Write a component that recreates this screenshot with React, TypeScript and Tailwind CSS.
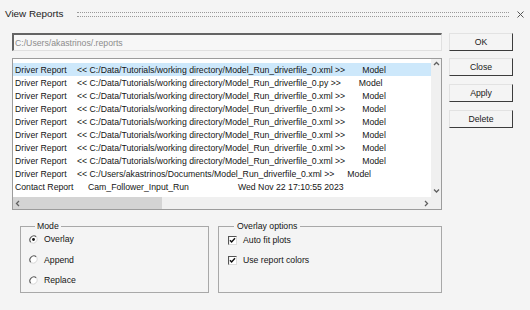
import React from 'react';

const rows = [
  { kind: 'Driver Report', path: '<< C:/Data/Tutorials/working directory/Model_Run_driverfile_0.xml >>', gap: 'ml-[17px]' },
  { kind: 'Driver Report', path: '<< C:/Data/Tutorials/working directory/Model_Run_driverfile_0.py >>', gap: 'ml-[18px]' },
  { kind: 'Driver Report', path: '<< C:/Data/Tutorials/working directory/Model_Run_driverfile_0.xml >>', gap: 'ml-[17px]' },
  { kind: 'Driver Report', path: '<< C:/Data/Tutorials/working directory/Model_Run_driverfile_0.xml >>', gap: 'ml-[17px]' },
  { kind: 'Driver Report', path: '<< C:/Data/Tutorials/working directory/Model_Run_driverfile_0.xml >>', gap: 'ml-[17px]' },
  { kind: 'Driver Report', path: '<< C:/Data/Tutorials/working directory/Model_Run_driverfile_0.xml >>', gap: 'ml-[17px]' },
  { kind: 'Driver Report', path: '<< C:/Data/Tutorials/working directory/Model_Run_driverfile_0.xml >>', gap: 'ml-[17px]' },
  { kind: 'Driver Report', path: '<< C:/Data/Tutorials/working directory/Model_Run_driverfile_0.xml >>', gap: 'ml-[17px]' },
  { kind: 'Driver Report', path: '<< C:/Users/akastrinos/Documents/Model_Run_driverfile_0.xml >>', gap: 'ml-[13px]' },
];

const Chevron = ({ dir }: { dir: 'up' | 'down' | 'left' | 'right' }) => {
  const d = {
    up: 'M1 4 L3.5 1.5 L6 4',
    down: 'M1 1.5 L3.5 4 L6 1.5',
    left: 'M4 1 L1.5 3.5 L4 6',
    right: 'M2 1 L4.5 3.5 L2 6',
  }[dir];
  return (
    <svg width="7" height="7" viewBox="0 0 7 7">
      <path d={d} fill="none" stroke="#606060" strokeWidth="1.3" />
    </svg>
  );
};

const Radio = ({ checked }: { checked?: boolean }) => (
  <svg width="9" height="9" viewBox="0 0 9 9">
    <circle cx="4.5" cy="4.5" r="4" fill="#fff" />
    <path d="M1.7 7.3 A4 4 0 0 1 7.3 1.7" fill="none" stroke="#555" strokeWidth="1.1" />
    <path d="M7.3 1.7 A4 4 0 0 1 1.7 7.3" fill="none" stroke="#dcdcdc" strokeWidth="1.1" />
    {checked && <circle cx="4.5" cy="4.5" r="1.4" fill="#111" />}
  </svg>
);

const Check = () => (
  <svg width="9" height="9" viewBox="0 0 9 9">
    <rect x="0.5" y="0.5" width="8" height="8" fill="#fff" stroke="#dcdcdc" />
    <path d="M0.5 8.5 V0.5 H8.5" fill="none" stroke="#555" strokeWidth="1.2" />
    <path d="M2 4.2 L3.6 6 L7 2.3" fill="none" stroke="#111" strokeWidth="1.4" />
  </svg>
);

const Btn = ({ label, className = '' }: { label: string; className?: string }) => (
  <div
    className={`h-[18px] flex items-center justify-center bg-[#f4f4f4] border border-t-[#e2e2e2] border-l-[#e2e2e2] border-r-[#3c3c3c] border-b-[#3c3c3c] text-[#1a1a1a] ${className}`}
  >
    {label}
  </div>
);

export default function App() {
  return (
    <div
      className="w-[530px] h-[310px] bg-[#f4f4f4] text-[#151515] text-[8.7px] leading-[12px] select-none"
      style={{ fontFamily: '"Liberation Sans", Arial, sans-serif' }}
    >
      {/* title strip */}
      <div className="h-[28px] flex items-center pl-[5px] pr-[6px]">
        <span className="w-[72px] text-[9.9px] text-[#222]">View Reports</span>
        <div className="flex-1 h-[5px] border-y border-dotted border-[#9a9a9a]" />
        <svg width="7" height="7" viewBox="0 0 7 7" className="ml-[8px]">
          <path d="M0.5 0.5 L6.5 6.5 M6.5 0.5 L0.5 6.5" stroke="#555" strokeWidth="1" />
        </svg>
      </div>

      <div className="flex pl-[12px] pt-[5px] gap-[7px]">
        <div className="w-[430px] flex flex-col">
          {/* path box */}
          <div className="h-[18px] flex items-center pl-[1px] bg-[#f7f7f7] border-t-2 border-l-2 border-r border-b border-t-[#646464] border-l-[#646464] border-r-[#e0e0e0] border-b-[#e0e0e0] text-[#8c8c8c]">
            C:/Users/akastrinos/.reports
          </div>

          {/* list */}
          <div className="mt-[7px] h-[152px] border border-[#9c9c9c] bg-white flex flex-col">
            <div className="flex-1 flex min-h-0">
              <div className="flex-1 pt-[4px] overflow-hidden">
                {rows.map((r, i) => (
                  <div
                    key={i}
                    className={`h-[13px] flex items-center pl-[2px] whitespace-pre ${i === 0 ? 'bg-[#cde8fb]' : ''}`}
                  >
                    <span className="w-[62px] shrink-0">{r.kind}</span>
                    <span>{r.path}</span>
                    <span className={r.gap}>Model</span>
                  </div>
                ))}
                <div className="h-[13px] flex items-center pl-[2px] whitespace-pre">
                  <span className="w-[73px] shrink-0">Contact Report</span>
                  <span className="w-[150px] shrink-0">Cam_Follower_Input_Run</span>
                  <span>Wed Nov 22 17:10:55 2023</span>
                </div>
              </div>
              <div className="w-[10px] bg-[#f0f0f0] flex flex-col items-center justify-between py-[2px]">
                <Chevron dir="up" />
                <Chevron dir="down" />
              </div>
            </div>
            <div className="h-[12px] flex">
              <div className="flex-1 bg-[#f0f0f0] flex items-center justify-between pr-[1px]">
                <div className="w-[149px] h-full bg-[#d4d4d4] flex items-center pl-[2px]">
                  <Chevron dir="left" />
                </div>
                <Chevron dir="right" />
              </div>
              <div className="w-[10px] bg-[#f0f0f0]" />
            </div>
          </div>

          {/* option groups */}
          <div className="flex pl-[8px] gap-[9px] mt-[10px]">
            <fieldset className="w-[189px] h-[73px] border border-[#a8a8a8] pl-[8px]">
              <legend className="ml-[6px] px-[2px] leading-[12px]">Mode</legend>
              <div className="flex flex-col gap-[6.5px]">
                {[
                  ['Overlay', true],
                  ['Append', false],
                  ['Replace', false],
                ].map(([label, on]) => (
                  <div key={label as string} className="h-[14px] flex items-center gap-[6px]">
                    <Radio checked={on as boolean} />
                    <span>{label as string}</span>
                  </div>
                ))}
              </div>
            </fieldset>
            <fieldset className="flex-1 h-[73px] border border-[#a8a8a8] pl-[9px]">
              <legend className="ml-[6px] px-[3px] leading-[12px]">Overlay options</legend>
              <div className="flex flex-col gap-[6px] pt-[1px]">
                {['Auto fit plots', 'Use report colors'].map((label) => (
                  <div key={label} className="h-[14px] flex items-center gap-[6px]">
                    <Check />
                    <span>{label}</span>
                  </div>
                ))}
              </div>
            </fieldset>
          </div>
        </div>

        {/* buttons */}
        <div className="w-[64px] flex flex-col">
          <Btn label="OK" />
          <Btn label="Close" className="mt-[7px]" />
          <Btn label="Apply" className="mt-[8px]" />
          <Btn label="Delete" className="mt-[8px]" />
        </div>
      </div>
    </div>
  );
}
